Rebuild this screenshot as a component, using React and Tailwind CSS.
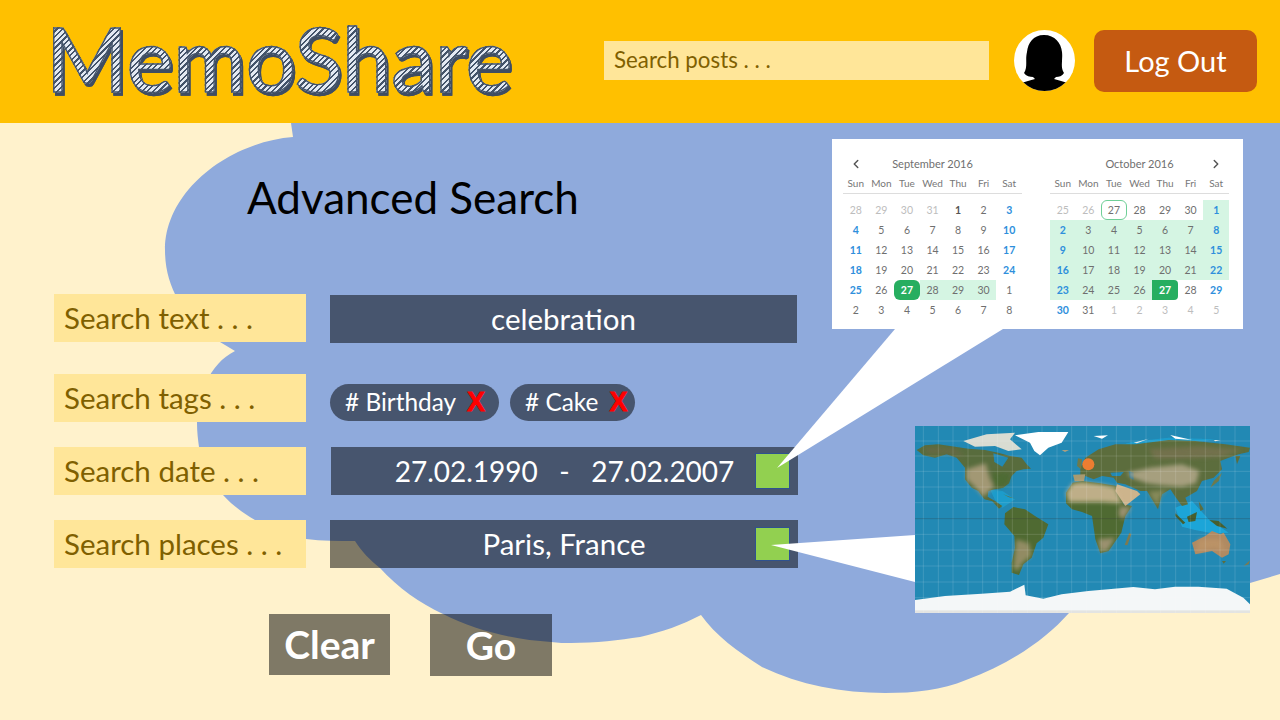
import { ChevronLeft, ChevronRight } from 'lucide-react';

const sans = '[font-family:Lato,sans-serif]';

const weekDays = ['Sun', 'Mon', 'Tue', 'Wed', 'Thu', 'Fri', 'Sat'];

const blue = 'font-bold text-[#2e8fdc]';
const plain = 'text-[#6f6f6f]';
const faint = 'text-[#bdbdbd]';
const range = 'bg-[#d5f5e3]';

const septDays = [
  28, 29, 30, 31, 1, 2, 3, 4, 5, 6, 7, 8, 9, 10, 11, 12, 13, 14, 15, 16, 17, 18, 19, 20, 21,
  22, 23, 24, 25, 26, 27, 28, 29, 30, 1, 2, 3, 4, 5, 6, 7, 8,
];
const octDays = [
  25, 26, 27, 28, 29, 30, 1, 2, 3, 4, 5, 6, 7, 8, 9, 10, 11, 12, 13, 14, 15, 16, 17, 18, 19,
  20, 21, 22, 23, 24, 25, 26, 27, 28, 29, 30, 31, 1, 2, 3, 4, 5,
];

const isWeekend = (i) => i % 7 === 0 || i % 7 === 6;

function septCell(i) {
  if (i < 4) return faint;
  if (i === 4) return 'font-bold text-[#555]';
  if (i === 30) return 'bg-[#27ae60] text-white font-bold rounded-md';
  if (i >= 31 && i <= 33) return `${range} ${plain}`;
  if (i >= 34) return plain;
  return isWeekend(i) ? blue : plain;
}

function octCell(i) {
  if (i < 2 || i >= 37) return faint;
  if (i === 2) return 'text-[#6f6f6f] border border-[#6fcf97] rounded-md';
  if (i === 32) return 'bg-[#27ae60] text-white font-bold rounded-r-sm';
  if (i >= 6 && i < 32) return `${range} ${isWeekend(i) ? blue : plain}`;
  return isWeekend(i) && i >= 33 ? blue : plain;
}

function Month({ title, days, cellClass, prev, next }) {
  return (
    <div className="w-[179px]">
      <div className="grid grid-cols-7 h-[21px] items-center text-[11px] text-[#6f6f6f]">
        <span className="flex justify-center text-[#555]">
          {prev && <ChevronLeft size={14} strokeWidth={2.5} />}
        </span>
        <span className="col-span-5 text-center pt-px">{title}</span>
        <span className="flex justify-center text-[#555]">
          {next && <ChevronRight size={14} strokeWidth={2.5} />}
        </span>
      </div>
      <div className="grid grid-cols-7 h-[20px] items-center text-center text-[10px] text-[#777] border-b border-[#ddd]">
        {weekDays.map((d) => (
          <span key={d}>{d}</span>
        ))}
      </div>
      <div className="grid grid-cols-7 auto-rows-[20px] mt-[6px] text-[10.5px]">
        {days.map((d, i) => (
          <span key={i} className={`flex items-center justify-center pt-px ${cellClass(i)}`}>
            {d}
          </span>
        ))}
      </div>
    </div>
  );
}

function Calendar() {
  return (
    <div className="flex w-[411px] h-[190px] bg-white pt-[14px] pl-[11px] gap-[28px]">
      <Month title="September 2016" days={septDays} cellClass={septCell} prev />
      <Month title="October 2016" days={octDays} cellClass={octCell} next />
    </div>
  );
}

// world map, drawn in a 1005x561 box (3x the size on the page)
function WorldMap() {
  const lat = [45, 90, 136, 183, 230, 325, 372, 420, 468, 515];
  const lon = [25, 70, 114, 159, 203, 248, 292, 337, 381, 426, 470, 515, 559, 604, 648, 693, 737, 782, 826, 871, 915, 960];
  return (
    <svg viewBox="0 0 1005 561" preserveAspectRatio="none" className="block w-[335px] h-[187px] ml-[83px] mt-[97px]">
      <defs>
        <filter id="edge" x="-5%" y="-5%" width="110%" height="110%">
          <feGaussianBlur stdDeviation="1.6" />
        </filter>
        <filter id="patch" x="-20%" y="-20%" width="140%" height="140%">
          <feGaussianBlur stdDeviation="7" />
        </filter>
      </defs>
      <rect width="1005" height="561" fill="#2289b4" />

      {/* shallow water */}
      <g filter="url(#edge)" fill="#1ea5d8">
        <path d="M781 245 L831 225 L881 280 L941 320 L891 322 L841 312 L801 302 Z" />
        <path d="M225 190 L262 195 L300 220 L262 245 L240 222 Z" fill="#1f9ccb" />
        <path d="M560 75 L650 48 L760 35 L900 40 L760 62 L640 70 Z" fill="#1f9ccb" />
      </g>

      {/* americas */}
      <g filter="url(#edge)">
        <path d="M5 72 L30 58 L70 55 L120 62 L160 68 L210 72 L250 80 L285 90 L320 95 L335 115 L348 128 L325 130 L305 135 L290 150 L282 172 L265 185 L250 188 L238 190 L220 195 L218 212 L240 225 L262 240 L252 248 L232 226 L208 220 L190 195 L170 185 L150 160 L150 125 L125 95 L95 85 L60 95 L25 88 Z" fill="#586c3c" />
        <path d="M235 82 L280 95 L262 122 L238 108 Z" fill="#2289b4" />
        <path d="M265 205 L300 218 L282 214 Z" fill="#5f7345" />
        <path d="M270 262 L295 243 L330 250 L360 270 L400 295 L385 335 L365 352 L350 395 L325 415 L312 447 L290 440 L290 410 L300 365 L298 330 L268 295 Z" fill="#4f6a33" />
      </g>
      <g filter="url(#patch)" opacity="0.8">
        <path d="M155 130 L212 112 L225 160 L236 182 L205 212 L182 185 L155 160 Z" fill="#b5a382" />
        <path d="M232 140 L285 142 L280 172 L250 186 L232 178 Z" fill="#4c6c33" />
        <path d="M25 65 L120 70 L150 90 L95 82 L40 82 Z" fill="#6d6846" />
        <path d="M304 340 L342 352 L350 388 L322 412 L306 436 L296 425 L298 390 Z" fill="#a3946f" />
      </g>

      {/* africa and eurasia */}
      <g transform="translate(501 0)">
        <g filter="url(#edge)">
          <path d="M-48 200 L-28 170 L0 165 L55 172 L105 180 L125 235 L150 240 L130 270 L118 320 L80 375 L55 382 L40 340 L30 270 L0 258 L-30 250 L-48 232 Z" fill="#4f6a33" />
          <path d="M10 95 L50 70 L100 55 L160 55 L260 42 L340 45 L430 55 L504 65 L500 78 L470 85 L440 95 L415 105 L420 130 L395 155 L360 165 L345 195 L310 215 L318 235 L300 240 L282 215 L265 190 L240 205 L228 250 L210 220 L195 195 L175 195 L130 175 L105 170 L95 155 L60 150 L35 160 L10 150 L-5 155 L-5 125 Z" fill="#5c6d3e" />
          <path d="M-27 146 L10 145 L6 165 L-22 166 Z" fill="#a89a70" />
          <path d="M-12 97 L0 100 L-3 130 L-15 120 Z" fill="#6d7a4d" />
          <path d="M105 175 L165 195 L175 205 L130 240 L100 195 Z" fill="#cdb48c" />
          <path d="M128 357 L142 320 L148 325 L136 358 Z" fill="#7d7a50" />
          <path d="M140 135 L155 140 L155 162 L143 155 Z" fill="#1b6f92" />
          <path d="M85 140 L125 138 L115 150 L90 150 Z" fill="#2289b4" />
          <path d="M280 262 L310 290 L303 295 L280 270 Z" fill="#475f2f" />
          <path d="M315 272 L345 258 L340 285 L320 288 Z" fill="#475f2f" />
          <path d="M382 282 L410 285 L436 308 L405 300 Z" fill="#475f2f" />
          <path d="M350 225 L365 250 L355 255 Z" fill="#5c6d3e" />
          <path d="M395 165 L420 140 L410 165 L385 185 Z" fill="#6d7a4d" />
          <path d="M460 90 L475 90 L465 115 Z" fill="#5c6d3e" />
          <path d="M330 350 L370 330 L390 315 L415 325 L425 320 L445 355 L440 385 L420 395 L390 375 L340 385 Z" fill="#b08a62" />
          <path d="M420 405 L432 405 L425 413 Z" fill="#5c6d3e" />
          <path d="M485 420 L504 403 L500 415 Z" fill="#7d7a50" />
        </g>
        <g filter="url(#patch)" opacity="0.85">
          <path d="M-48 200 L-28 172 L0 168 L55 175 L100 184 L120 232 L60 228 L-40 228 Z" fill="#d2bb97" />
          <path d="M48 340 L100 335 L78 372 L56 378 Z" fill="#a8987a" />
          <path d="M112 242 L148 242 L125 280 L110 270 Z" fill="#a8987a" />
          <path d="M135 140 L205 125 L300 115 L352 135 L342 172 L300 182 L240 178 L195 172 L150 155 Z" fill="#b3a88a" />
          <path d="M200 70 L350 60 L480 72 L420 92 L300 98 L220 98 Z" fill="#77724f" />
          <path d="M200 198 L258 192 L236 208 L228 240 L212 218 Z" fill="#8f9060" />
          <path d="M350 340 L415 340 L430 375 L395 365 L345 378 Z" fill="#bd9468" />
        </g>
      </g>

      {/* ice */}
      <g filter="url(#edge)">
        <path d="M145 45 L215 25 L300 20 L285 40 L320 70 L280 75 L240 60 L180 62 Z" fill="#d9dcd2" />
        <path d="M300 28 L370 18 L460 18 L440 50 L400 65 L375 88 L358 75 L345 50 Z" fill="#ffffff" />
        <path d="M440 72 L462 72 L450 78 Z" fill="#aa9f80" />
        <path d="M536 30 L579 28 L561 38 Z" fill="#ffffff" />
        <path d="M656 50 L701 38 L666 52 Z" fill="#e8ecea" />
        <path d="M766 27 L831 42 L781 38 Z" fill="#ffffff" />
        <path d="M896 42 L916 42 L901 46 Z" fill="#e8ecea" />
        <path d="M0 522 L90 510 L200 503 L285 497 L328 476 L332 508 L385 518 L440 505 L520 495 L580 490 L655 483 L720 490 L780 482 L850 482 L935 488 L985 515 L1005 535 L1005 561 L0 561 Z" fill="#f4f7f8" />
      </g>
      <rect y="553" width="1005" height="8" fill="#e3e4e2" />

      {lat.map((y) => (
        <line key={y} x1="0" x2="1005" y1={y} y2={y} stroke="#fff" strokeOpacity="0.16" strokeWidth="2.5" />
      ))}
      {lon.map((x) => (
        <line key={x} x1={x} x2={x} y1="0" y2="561" stroke="#fff" strokeOpacity="0.16" strokeWidth="2.5" />
      ))}
      <line x1="0" x2="1005" y1="278" y2="278" stroke="#333" strokeOpacity="0.3" strokeWidth="2.5" />
      <circle cx="520" cy="115" r="18" fill="#ed7d31" />
    </svg>
  );
}

function Avatar() {
  return (
    <svg viewBox="0 0 61 61" className="w-[61px] h-[61px] mt-[30px] ml-[25px]">
      <defs>
        <clipPath id="round">
          <circle cx="30.5" cy="30.5" r="30.5" />
        </clipPath>
      </defs>
      <circle cx="30.5" cy="30.5" r="30.5" fill="#fff" />
      <path
        clipPath="url(#round)"
        d="M30 5 C41 5 47 13 48 22 C49 30 46 37 50 43 C48 46 45 47 42 47 L40 49 C46 51 52 52 56 54 L56 62 L5 62 L5 54 C9 52 15 51 21 49 L19 47 C16 47 12 46 10 43 C14 37 11 30 13 22 C14 13 19 5 30 5 Z"
        fill="#000"
      />
    </svg>
  );
}

function Label({ children }) {
  return (
    <div className="w-[252px] h-[48px] bg-[#ffe699] text-[#7f6000] text-[29.5px] pl-[10px] flex items-center shrink-0">
      {children}
    </div>
  );
}

function Field({ children, className = '' }) {
  return (
    <div className={`relative flex items-center justify-center h-[48px] bg-black/50 text-white text-[29.5px] ${className}`}>
      {children}
    </div>
  );
}

function Tag({ text, className }) {
  return (
    <div className={`flex items-center h-[37px] pl-[15px] rounded-full bg-black/50 text-white text-[24.4px] ${className}`}>
      <span>{text}</span>
      <span className="ml-[11px] text-[#ff0000] text-[27px] font-bold leading-none [font-family:'Liberation_Sans',sans-serif] [-webkit-text-stroke:0.8px_#ff0000]">
        X
      </span>
    </div>
  );
}

function Picker({ className }) {
  return <span className={`absolute right-[8px] w-[35px] bg-[#92d050] border border-[#2f528f] ${className}`} />;
}

function SearchForm() {
  return (
    <div className="w-[744px] ml-[54px] shrink-0">
      <div className="h-[171px] pt-[46px] pl-[193px] text-[44px] leading-[56px] text-black">Advanced Search</div>

      <div className="flex gap-[24px] h-[48px]">
        <Label>Search text . . .</Label>
        <Field className="w-[467px] mt-px">celebration</Field>
      </div>

      <div className="flex gap-[24px] mt-[32px]">
        <Label>Search tags . . .</Label>
        <div className="flex gap-[11px] mt-[10px]">
          <Tag text="# Birthday" className="w-[169px]" />
          <Tag text="# Cake" className="w-[125px]" />
        </div>
      </div>

      <div className="flex gap-[25px] mt-[25px]">
        <Label>Search date . . .</Label>
        <Field className="w-[467px]">
          <span className="whitespace-pre text-[28px]">27.02.1990   -   27.02.2007</span>
          <Picker className="h-[36px] top-[6px]" />
        </Field>
      </div>

      <div className="flex gap-[24px] mt-[25px]">
        <Label>Search places . . .</Label>
        <Field className="w-[468px]">
          Paris, France
          <Picker className="h-[34px] top-[7px]" />
        </Field>
      </div>

      <div className="flex gap-[40px] mt-[46px] ml-[215px] text-white text-[39px] font-bold">
        <button className="w-[121px] h-[61px] bg-black/50">Clear</button>
        <button className="w-[122px] h-[62px] bg-black/50">Go</button>
      </div>
    </div>
  );
}

export default function App() {
  return (
    <div className={`w-[1280px] h-[720px] overflow-hidden bg-[#fff2cc] ${sans}`}>
      <header className="flex items-start h-[123px] bg-[#ffc000]">
        <div className="w-[558px] ml-[46px] h-[123px] flex items-center">
          <span className="text-[88px] font-medium leading-none -mt-[8px] drop-shadow-[2px_3px_0_#3f4d62]">
            <span className="text-transparent bg-clip-text bg-[repeating-linear-gradient(135deg,#44546a_0px,#44546a_1.6px,#e3e9f2_1.6px,#e3e9f2_4px)] [-webkit-text-stroke:1.4px_#44546a]">
              MemoShare
            </span>
          </span>
        </div>
        <div className="w-[385px] h-[39px] mt-[41px] pl-[10px] pb-[2px] flex items-center bg-[#ffe699] text-[#7f6000] text-[22.3px]">
          Search posts . . .
        </div>
        <Avatar />
        <button className="w-[163px] h-[62px] mt-[30px] ml-[19px] rounded-[10px] bg-[#c55a11] text-white text-[29px]">
          Log Out
        </button>
      </header>

      <main className="relative flex h-[597px]">
        <svg viewBox="0 123 1280 597" className="absolute inset-0 w-[1280px] h-[597px]">
          <path
            fill="#8faadc"
            d="M291 123 L293 137 C230 142 165 190 165 250 C165 270 170 285 178 300 C190 318 205 332 220 342 L235 351 C222 358 213 367 205 385 C199 398 197 410 197 423 C197 432 198 440 199 447 C206 465 213 482 223 495 C232 505 243 513 255 520 C272 530 288 536 306 539 C322 541 338 541 355 541 C362 552 370 560 380 568 C398 588 420 603 443 614 C475 630 513 640 551 642 C558 643 565 643 571 643 C595 643 620 640 640 637 C662 632 682 625 701 615 C715 635 738 652 762 667 C800 685 842 693 885 693 C915 693 942 690 966 680 C1010 664 1045 640 1069 613 L1250 583 L1280 574 L1280 123 Z"
          />
        </svg>

        <div className="relative flex">
          <SearchForm />
          <div className="ml-[34px] pt-[16px] z-20">
            <Calendar />
            <WorldMap />
          </div>
        </div>

        <svg viewBox="0 123 1280 597" className="absolute inset-0 w-[1280px] h-[597px] z-10 pointer-events-none">
          <polygon points="895,329 1003,329 777,468" fill="#fff" />
          <polygon points="771,545 915,535 915,582" fill="#fff" />
        </svg>
      </main>
    </div>
  );
}
